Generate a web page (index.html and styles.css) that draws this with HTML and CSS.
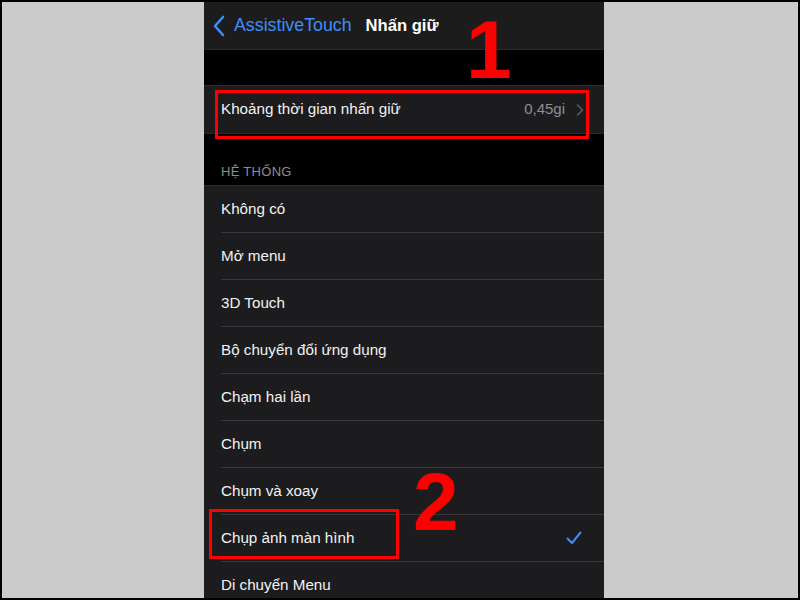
FILE: index.html
```html
<!DOCTYPE html>
<html lang="vi">
<head>
<meta charset="utf-8">
<link rel="stylesheet" href="styles.css">
</head>
<body>
<div class="frame">
  <div class="phone">
    <div class="nav">
      <svg class="back-icon" width="14" height="22" viewBox="0 0 14 22"><path d="M11 2 L3 11 L11 20" fill="none" stroke="#3e8ef7" stroke-width="2.6" stroke-linecap="round" stroke-linejoin="round"/></svg>
      <span class="back-label">AssistiveTouch</span>
      <span class="title">Nhấn giữ</span>
    </div>
    <div class="gap-top"></div>
    <div class="group">
      <div class="cell cell-single">
        <span class="label">Khoảng thời gian nhấn giữ</span>
        <span class="value">0,45gi</span>
        <svg class="chev" width="8" height="12" viewBox="0 0 8 12"><path d="M1.5 1 L6.5 6 L1.5 11" fill="none" stroke="#5a5a5e" stroke-width="1.6" stroke-linecap="round" stroke-linejoin="round"/></svg>
      </div>
    </div>
    <div class="section-header">HỆ THỐNG</div>
    <div class="group list">
      <div class="cell"><span class="label">Không có</span></div>
      <div class="cell"><span class="label">Mở menu</span></div>
      <div class="cell"><span class="label">3D Touch</span></div>
      <div class="cell"><span class="label">Bộ chuyển đổi ứng dụng</span></div>
      <div class="cell"><span class="label">Chạm hai lần</span></div>
      <div class="cell"><span class="label">Chụm</span></div>
      <div class="cell"><span class="label">Chụm và xoay</span></div>
      <div class="cell"><span class="label">Chụp ảnh màn hình</span>
        <svg class="check" width="16" height="14" viewBox="0 0 16 14"><path d="M1.5 7.5 L6 12 L14.5 1.5" fill="none" stroke="#3e8ef7" stroke-width="2" stroke-linecap="round" stroke-linejoin="round"/></svg>
      </div>
      <div class="cell"><span class="label">Di chuyển Menu</span></div>
    </div>
    <div class="mark mark-box1"></div>
    <div class="mark mark-box2"></div>
    <div class="mark mark-num1">1</div>
    <div class="mark mark-num2">2</div>
  </div>
</div>
</body>
</html>
```

FILE: styles.css
```css
html, body {
  margin: 0;
  padding: 0;
  background: #000;
}
.frame {
  width: 800px;
  height: 600px;
  box-sizing: border-box;
  border: 2px solid #000;
  background: #cbcbcb;
  overflow: hidden;
  font-family: "Liberation Sans", Arial, sans-serif;
}
.phone {
  position: relative;
  margin-left: 202px;
  width: 400px;
  height: 596px;
  background: #000;
  overflow: hidden;
}
.nav {
  height: 47px;
  background: #1c1c1c;
  border-bottom: 1px solid #2a2a2a;
  display: flex;
  align-items: center;
  padding-left: 8px;
  box-sizing: content-box;
}
.back-icon {
  margin-right: 8px;
}
.back-label {
  color: #3e8ef7;
  font-size: 17.8px;
}
.title {
  color: #fff;
  font-weight: bold;
  font-size: 16.6px;
  margin-left: 14px;
}
.gap-top {
  height: 35px;
}
.group {
  background: #1c1c1e;
  border-top: 1px solid #2e2e30;
}
.cell {
  height: 46px;
  margin-left: 17px;
  padding-right: 22px;
  display: flex;
  align-items: center;
  border-bottom: 1px solid #38383a;
}
.cell-single {
  height: 47px;
  border-bottom: none;
}
.list .cell:last-child {
  border-bottom: none;
}
.label {
  color: #f2f2f2;
  font-size: 15.2px;
  flex: 1;
  padding-bottom: 2px;
}
.value {
  color: #8e8e93;
  font-size: 15px;
  margin-right: 11px;
  padding-bottom: 2px;
}
.chev {
  margin-right: -2px;
}
.section-header {
  height: 52px;
  box-sizing: border-box;
  padding: 30px 0 0 17px;
  color: #8d8d93;
  font-size: 13px;
  letter-spacing: 0.3px;
  border-top: 1px solid #2a2a2c;
}
.mark {
  position: absolute;
}
.mark-box1 {
  left: 11px;
  top: 88px;
  width: 374px;
  height: 49px;
  box-sizing: border-box;
  border: 3px solid #ff0000;
}
.mark-box2 {
  left: 5px;
  top: 507px;
  width: 190px;
  height: 50px;
  box-sizing: border-box;
  border: 3px solid #ff0000;
}
.mark-num1, .mark-num2 {
  color: #ff0000;
  font-weight: bold;
  font-size: 82px;
  line-height: 1;
}
.mark-num1 {
  left: 262px;
  top: 7px;
}
.mark-num2 {
  left: 209px;
  top: 459px;
}
```
